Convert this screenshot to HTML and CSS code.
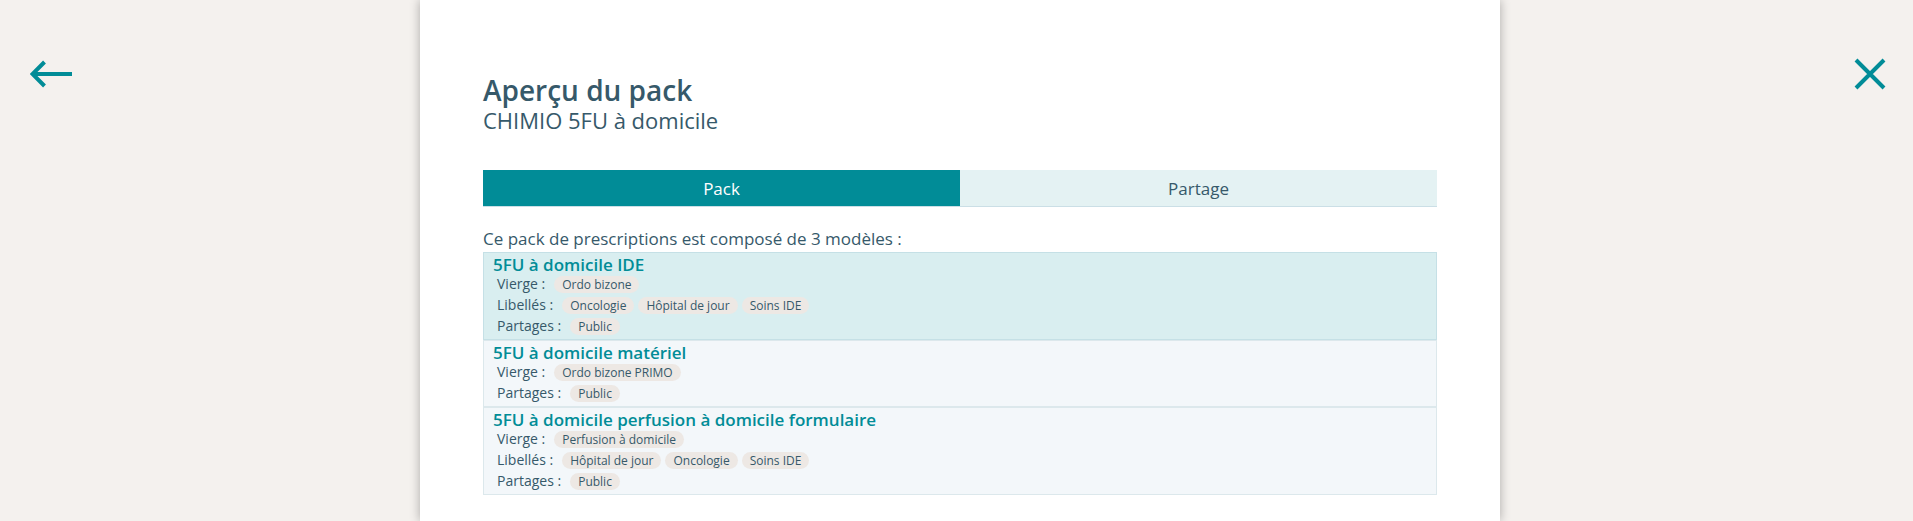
FILE: index.html
```html
<!DOCTYPE html>
<html lang="fr">
<head>
<meta charset="utf-8">
<meta name="viewport" content="width=device-width, initial-scale=1">
<title>Aperçu du pack</title>
<link rel="stylesheet" href="styles.css">
</head>
<body>
<div class="screen">
  <div class="side">
    <button class="icon-button" type="button" aria-label="Retour">
      <svg width="42" height="28" viewBox="0 0 42 28"><path d="M42 14H3M14.500 2L2.500 14l12 12"/></svg>
    </button>
  </div>
  <main class="sheet">
    <h1 class="title">Aperçu du pack</h1>
    <p class="subtitle">CHIMIO 5FU à domicile</p>
    <div class="tabs" role="tablist">
      <button class="tab tab-active" type="button" role="tab" aria-selected="true">Pack</button>
      <button class="tab" type="button" role="tab" aria-selected="false">Partage</button>
    </div>
    <p class="intro">Ce pack de prescriptions est composé de 3 modèles :</p>
    <ul class="models">
      <li class="model model-selected">
        <h2 class="name">5FU à domicile IDE</h2>
        <div class="row"><span class="label">Vierge :</span><span class="tag">Ordo bizone</span></div>
        <div class="row"><span class="label">Libellés :</span><span class="tag">Oncologie</span><span class="tag">Hôpital de jour</span><span class="tag">Soins IDE</span></div>
        <div class="row"><span class="label">Partages :</span><span class="tag">Public</span></div>
      </li>
      <li class="model">
        <h2 class="name">5FU à domicile matériel</h2>
        <div class="row"><span class="label">Vierge :</span><span class="tag">Ordo bizone PRIMO</span></div>
        <div class="row"><span class="label">Partages :</span><span class="tag">Public</span></div>
      </li>
      <li class="model">
        <h2 class="name">5FU à domicile perfusion à domicile formulaire</h2>
        <div class="row"><span class="label">Vierge :</span><span class="tag">Perfusion à domicile</span></div>
        <div class="row"><span class="label">Libellés :</span><span class="tag">Hôpital de jour</span><span class="tag">Oncologie</span><span class="tag">Soins IDE</span></div>
        <div class="row"><span class="label">Partages :</span><span class="tag">Public</span></div>
      </li>
    </ul>
  </main>
  <div class="side side-end">
    <button class="icon-button" type="button" aria-label="Fermer">
      <svg width="32" height="32" viewBox="0 0 32 32"><path d="M2 2l28 28M30 2L2 30"/></svg>
    </button>
  </div>
</div>
</body>
</html>
```
FILE: styles.css
```css
* {
  box-sizing: border-box;
}

body {
  margin: 0;
  background: #f4f1ee;
  color: #36596a;
  font-family: "Segoe UI", "Open Sans", "Noto Sans", sans-serif;
}

h1, h2, p, ul {
  margin: 0;
  padding: 0;
}

.screen {
  display: grid;
  grid-template-columns: 1fr minmax(0, 1080px) 1fr;
  padding-left: 7px;
  min-height: 100vh;
}

.side {
  display: flex;
  align-items: flex-start;
  padding: 58px 27px 0 23px;
}

.side-end {
  justify-content: flex-end;
}

.icon-button {
  display: flex;
  align-items: center;
  height: 32px;
  padding: 0;
  border: 0;
  background: none;
  cursor: pointer;
}

.icon-button svg {
  fill: none;
  stroke: #018c97;
  stroke-width: 4;
}

.sheet {
  padding: 73px 63px 24px;
  background: #fff;
  box-shadow: 0 0 10px rgba(0, 0, 0, 0.3);
}

.title {
  font-size: 28px;
  font-weight: 600;
  line-height: 34px;
}

.subtitle {
  font-size: 22px;
  line-height: 26px;
}

.tabs {
  display: flex;
  margin-top: 37px;
  border-bottom: 1px solid #cbdfe6;
}

.tab {
  flex: 1;
  height: 36px;
  padding: 0;
  border: 0;
  background: #e4f2f3;
  color: inherit;
  font-family: inherit;
  font-size: 17px;
  cursor: pointer;
}

.tab-active {
  background: #018c97;
  color: #fff;
}

.intro {
  margin-top: 20px;
  padding-bottom: 2px;
  font-size: 17px;
  line-height: 23px;
}

.models {
  list-style: none;
}

.model {
  padding: 1px 9px 0;
  border: 1px solid #dce8ec;
  background: #f3f7fa;
}

.model-selected {
  border-color: #c5e0e6;
  background: #d9eef0;
}

.name {
  color: #018c97;
  font-size: 17px;
  font-weight: 600;
  line-height: 22px;
}

.row {
  display: flex;
  gap: 4px;
  height: 21px;
  padding: 0 4px;
}

.label {
  margin-right: 5px;
  font-size: 14px;
  line-height: 16px;
}

.tag {
  height: 17px;
  padding: 0 8px;
  border-radius: 9px;
  background: #ede8e4;
  font-size: 12px;
  line-height: 17px;
}
```
